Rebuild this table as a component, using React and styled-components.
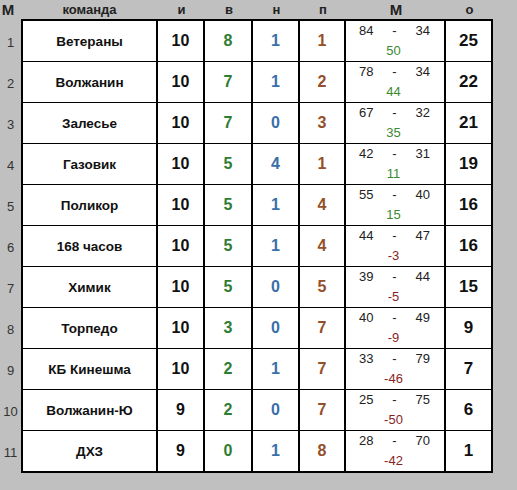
import React from "react";
import styled, { createGlobalStyle } from "styled-components";

const GlobalStyle = createGlobalStyle`
  html, body {
    margin: 0;
    padding: 0;
    background: #c0c0c0;
  }
  body {
    font-family: "Liberation Sans", Arial, sans-serif;
    color: #111;
  }
`;

const teams = [
  { name: "Ветераны", games: 10, w: 8, d: 1, l: 1, gf: 84, ga: 34, pts: 25 },
  { name: "Волжанин", games: 10, w: 7, d: 1, l: 2, gf: 78, ga: 34, pts: 22 },
  { name: "Залесье", games: 10, w: 7, d: 0, l: 3, gf: 67, ga: 32, pts: 21 },
  { name: "Газовик", games: 10, w: 5, d: 4, l: 1, gf: 42, ga: 31, pts: 19 },
  { name: "Поликор", games: 10, w: 5, d: 1, l: 4, gf: 55, ga: 40, pts: 16 },
  { name: "168 часов", games: 10, w: 5, d: 1, l: 4, gf: 44, ga: 47, pts: 16 },
  { name: "Химик", games: 10, w: 5, d: 0, l: 5, gf: 39, ga: 44, pts: 15 },
  { name: "Торпедо", games: 10, w: 3, d: 0, l: 7, gf: 40, ga: 49, pts: 9 },
  { name: "КБ Кинешма", games: 10, w: 2, d: 1, l: 7, gf: 33, ga: 79, pts: 7 },
  { name: "Волжанин-Ю", games: 9, w: 2, d: 0, l: 7, gf: 25, ga: 75, pts: 6 },
  { name: "ДХЗ", games: 9, w: 0, d: 1, l: 8, gf: 28, ga: 70, pts: 1 },
];

const COLUMNS = "21px 137px 47px 48px 47px 46px 100px 47px";

const colors = {
  win: "#2f7d32",
  draw: "#3a6ea8",
  loss: "#94502a",
  plus: "#3c8a2e",
  minus: "#8a1f1f",
};

const Page = styled.div`
  width: 517px;
  min-height: 490px;
  background: #c0c0c0;
`;

const HeaderRow = styled.div`
  display: grid;
  grid-template-columns: ${COLUMNS};
  height: 19px;
  align-items: center;
`;

const HeadCell = styled.div`
  text-align: center;
  font-weight: bold;
  font-size: ${(p) => (p.$big ? "15px" : "13px")};
  color: #222;
  padding-right: ${(p) => (p.$left ? "5px" : "0")};
  line-height: 19px;
`;

const Row = styled.div`
  display: grid;
  grid-template-columns: ${COLUMNS};
  height: ${(p) => (p.$first ? "43px" : "41px")};
`;

const Rank = styled.div`
  display: flex;
  align-items: center;
  justify-content: center;
  font-size: 13px;
  color: #333;
  padding-top: ${(p) => (p.$first ? "2px" : "0")};
`;

const Cell = styled.div`
  box-sizing: border-box;
  background: #fff;
  border-right: 2px solid #000;
  border-bottom: 2px solid #000;
  border-top: ${(p) => (p.$first ? "2px solid #000" : "none")};
  border-left: ${(p) => (p.$edge ? "2px solid #000" : "none")};
  display: flex;
  align-items: center;
  justify-content: center;
`;

const TeamName = styled.span`
  font-weight: bold;
  font-size: 13.5px;
  color: #111;
`;

const Num = styled.span`
  font-weight: bold;
  font-size: ${(p) => (p.$big ? "17px" : "16px")};
  color: ${(p) => p.$color || "#111"};
`;

const Goals = styled.div`
  width: 100%;
  display: flex;
  flex-direction: column;
  padding: 0 14px 0 13px;
  box-sizing: border-box;
  font-size: 13px;
  line-height: 20px;
  color: #222;
`;

const GoalLine = styled.div`
  display: grid;
  grid-template-columns: 1fr 1fr 1fr;
  span:nth-child(1) { text-align: left; }
  span:nth-child(2) { text-align: center; }
  span:nth-child(3) { text-align: right; }
`;

const Diff = styled.div`
  text-align: center;
  padding-right: 2px;
  color: ${(p) => (p.$neg ? colors.minus : colors.plus)};
`;

function TeamRow({ team, index }) {
  const first = index === 0;
  const diff = team.gf - team.ga;
  return (
    <Row $first={first}>
      <Rank $first={first}>{index + 1}</Rank>
      <Cell $first={first} $edge>
        <TeamName>{team.name}</TeamName>
      </Cell>
      <Cell $first={first}>
        <Num>{team.games}</Num>
      </Cell>
      <Cell $first={first}>
        <Num $color={colors.win}>{team.w}</Num>
      </Cell>
      <Cell $first={first}>
        <Num $color={colors.draw}>{team.d}</Num>
      </Cell>
      <Cell $first={first}>
        <Num $color={colors.loss}>{team.l}</Num>
      </Cell>
      <Cell $first={first}>
        <Goals>
          <GoalLine>
            <span>{team.gf}</span>
            <span>-</span>
            <span>{team.ga}</span>
          </GoalLine>
          <Diff $neg={diff < 0}>{diff}</Diff>
        </Goals>
      </Cell>
      <Cell $first={first}>
        <Num $big>{team.pts}</Num>
      </Cell>
    </Row>
  );
}

export default function App() {
  return (
    <Page>
      <GlobalStyle />
      <HeaderRow>
        <HeadCell $big $left>М</HeadCell>
        <HeadCell>команда</HeadCell>
        <HeadCell>и</HeadCell>
        <HeadCell>в</HeadCell>
        <HeadCell>н</HeadCell>
        <HeadCell>п</HeadCell>
        <HeadCell $big>М</HeadCell>
        <HeadCell>о</HeadCell>
      </HeaderRow>
      {teams.map((team, i) => (
        <TeamRow key={team.name} team={team} index={i} />
      ))}
    </Page>
  );
}
